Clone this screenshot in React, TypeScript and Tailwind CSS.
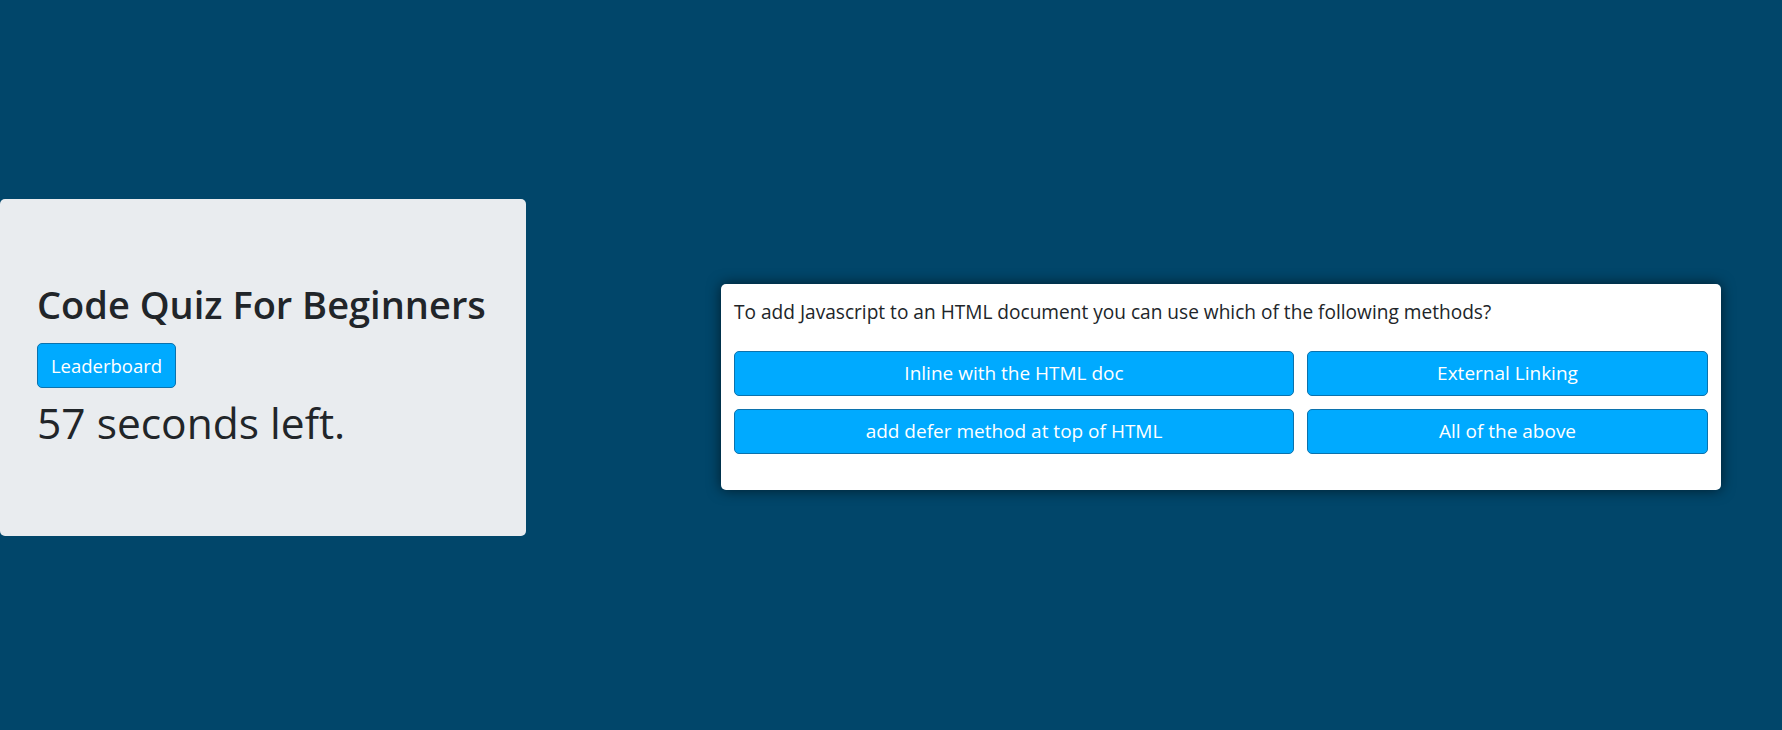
export default function App() {
  const answers = [
    "Inline with the HTML doc",
    "External Linking",
    "add defer method at top of HTML",
    "All of the above",
  ];
  return (
    <div className="min-h-[730px] w-full bg-[#01466a] font-['Open_Sans',sans-serif] text-[#212529]">
      <div className="flex items-start pt-[199px]">
        <div className="flex h-[337px] w-[526px] shrink-0 flex-col items-start rounded-[5px] bg-[#e9ecef] pl-[37px] pt-[82px]">
          <h2 className="text-[38px] font-semibold leading-[46px]">Code Quiz For Beginners</h2>
          <button className="mt-[16px] h-[45px] w-[139px] rounded-[5px] border border-[#0b72ad] bg-[#00aaff] text-[18.5px] text-white">
            Leaderboard
          </button>
          <p className="mt-[8px] text-[42.5px] font-normal leading-[54px]">57 seconds left.</p>
        </div>
        <div className="ml-[195px] mt-[85px] h-[206px] w-[1000px] shrink-0 rounded-[5px] bg-white px-[13px] pt-[14px] shadow-[0_0_14px_rgba(0,0,0,0.6)]">
          <p className="text-[19.1px] leading-[28px]">
            To add Javascript to an HTML document you can use which of the following methods?
          </p>
          <div className="mt-[25px] grid grid-cols-[560px_401px] gap-[13px]">
            {answers.map((a) => (
              <button
                key={a}
                className="h-[45px] rounded-[5px] border border-[#0b72ad] bg-[#00aaff] text-[19px] text-white"
              >
                {a}
              </button>
            ))}
          </div>
        </div>
      </div>
    </div>
  );
}
